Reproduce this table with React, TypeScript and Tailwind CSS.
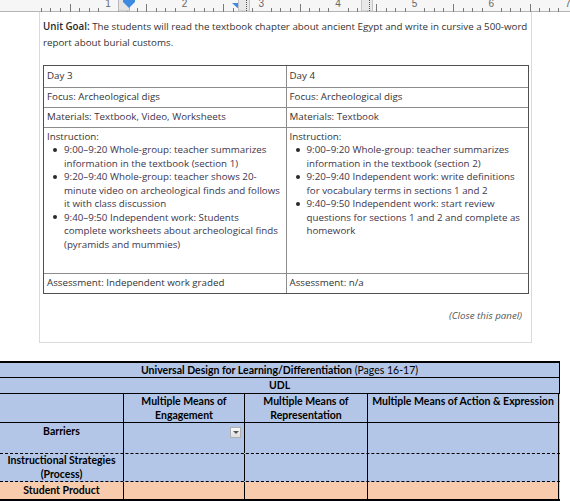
import React from "react";

const ticks = Array.from({ length: 60 }, (_, k) => k);

function Ruler() {
  const origin = 31.3;
  const step = 9.583;
  return (
    <svg width="570" height="12" className="block">
      <rect x="0" y="0" width="570" height="12" fill="#f6f6f6" />
      <line x1="0" y1="11.5" x2="570" y2="11.5" stroke="#b5b5b5" strokeWidth="1" />
      {ticks.map((k) => {
        const x = Math.round(origin + k * step) + 0.5;
        if (x > 570) return null;
        if (k % 8 === 0) return null;
        const tall = k % 4 === 0;
        return (
          <line
            key={k}
            x1={x}
            y1={tall ? 4 : 8}
            x2={x}
            y2={12}
            stroke="#7a7a7a"
            strokeWidth="1"
          />
        );
      })}
      {[1, 2, 3, 4, 5, 6, 7].map((n) => (
        <text
          key={n}
          x={origin + n * 8 * step}
          y="7"
          fontSize="10"
          fill="#666"
          textAnchor="middle"
          fontFamily="'Liberation Sans', Arial, sans-serif"
        >
          {n}
        </text>
      ))}
      {/* hanging indent box + first-line marker */}
      <rect x="118.5" y="-1" width="11" height="12" fill="#e4e4e4" stroke="#b8b8b8" />
      <path d="M123 0 H135 V2 L129 8 L123 2 Z" fill="#3d8be0" />
      {/* tab / column markers */}
      <path d="M232 3 H243 L237.5 8 Z" fill="#3d8be0" />
      <rect x="238.5" y="-1" width="11" height="12" fill="#e8e8e8" stroke="#c4c4c4" />
      <line x1="246.5" y1="0" x2="246.5" y2="11" stroke="#555" strokeDasharray="1 1" />
      <rect x="361.5" y="-1" width="11" height="12" fill="#e8e8e8" stroke="#c4c4c4" />
      <line x1="369.5" y1="0" x2="369.5" y2="11" stroke="#555" strokeDasharray="1 1" />
    </svg>
  );
}

// each bullet is kept as its printed lines
const day3 = [
  ["9:00–9:20 Whole-group: teacher summarizes", "information in the textbook (section 1)"],
  [
    "9:20–9:40 Whole-group: teacher shows 20-",
    "minute video on archeological finds and follows",
    "it with class discussion",
  ],
  [
    "9:40–9:50 Independent work: Students",
    "complete worksheets about archeological finds",
    "(pyramids and mummies)",
  ],
];

const day4 = [
  ["9:00–9:20 Whole-group: teacher summarizes", "information in the textbook (section 2)"],
  ["9:20–9:40 Independent work: write definitions", "for vocabulary terms in sections 1 and 2"],
  [
    "9:40–9:50 Independent work: start review",
    "questions for sections 1 and 2 and complete as",
    "homework",
  ],
];

function Bullets({ items }: { items: string[][] }) {
  return (
    <ul>
      {items.map((lines, i) => (
        <li key={i} className="flex">
          <span className="flex h-[13.5px] w-[17px] shrink-0 items-center pl-[6px]">
            <span className="block h-[4px] w-[4px] rounded-full bg-[#2a2a2a]" />
          </span>
          <span className="whitespace-nowrap text-[#40354d]">
            {lines.map((l, j) => (
              <React.Fragment key={j}>
                {j > 0 && <br />}
                {l}
              </React.Fragment>
            ))}
          </span>
        </li>
      ))}
    </ul>
  );
}

function Cell({ children, right, last }: { children: React.ReactNode; right?: boolean; last?: boolean }) {
  return (
    <td
      className={`px-[3px] align-top border-[#8c8c8c] ${right ? "" : "border-r"} ${last ? "" : "border-b"}`}
    >
      {children}
    </td>
  );
}

function LessonPanel() {
  return (
    <div className="ml-[39px] w-[493px] h-[331px] border-x border-b border-[#dadada] px-[3px] pt-[7px] font-['Open_Sans',sans-serif] text-[9.75px] text-[#333]">
      <p className="leading-[15.5px]">
        <span className="font-semibold text-[#2a2a2a]">Unit Goal:</span> The students will read the
        textbook chapter about ancient Egypt and write in cursive a 500-word report about burial
        customs.
      </p>
      <div className="mt-[15px] w-[486px] border border-[#505050]">
        <table className="w-full border-collapse table-fixed leading-[13.5px]">
          <colgroup>
            <col className="w-[242px]" />
            <col />
          </colgroup>
          <tbody>
            <tr className="h-[21px]">
              <Cell>
                <div className="pt-[3px]">Day 3</div>
              </Cell>
              <Cell right>
                <div className="pt-[3px]">Day 4</div>
              </Cell>
            </tr>
            <tr className="h-[20px]">
              <Cell>
                <div className="pt-[2px]">Focus: Archeological digs</div>
              </Cell>
              <Cell right>
                <div className="pt-[2px]">Focus: Archeological digs</div>
              </Cell>
            </tr>
            <tr className="h-[20px]">
              <Cell>
                <div className="pt-[2px]">
                  Materials: <span className="text-[#40354d]">Textbook, Video, Worksheets</span>
                </div>
              </Cell>
              <Cell right>
                <div className="pt-[2px]">
                  Materials: <span className="text-[#40354d]">Textbook</span>
                </div>
              </Cell>
            </tr>
            <tr className="h-[146px]">
              <Cell>
                <div className="pt-[2px]">Instruction:</div>
                <Bullets items={day3} />
              </Cell>
              <Cell right>
                <div className="pt-[2px]">Instruction:</div>
                <Bullets items={day4} />
              </Cell>
            </tr>
            <tr className="h-[20px]">
              <Cell last>
                <div className="pt-[2px]">Assessment: Independent work graded</div>
              </Cell>
              <Cell right last>
                <div className="pt-[2px]">Assessment: n/a</div>
              </Cell>
            </tr>
          </tbody>
        </table>
      </div>
      <p className="mt-[15px] pr-[6px] text-right italic text-[#555]">(Close this panel)</p>
    </div>
  );
}

function UdlSheet() {
  const cols = "grid grid-cols-[124px_121px_123px_191px]";
  return (
    <div className="mt-[18px] w-[560px] font-['Lato','Carlito',sans-serif] text-[10.5px] text-black">
      <div className="border-t-2 border-black" />
      <div className="h-[15px] bg-[#b4c6e7] border-r border-b border-black text-center leading-[14px]">
        <span className="font-bold">Universal Design for Learning/Differentiation</span> (Pages 16-17)
      </div>
      <div className="h-[16px] bg-[#b4c6e7] border-r border-b border-black text-center font-bold leading-[15px]">
        UDL
      </div>
      <div className={`${cols} h-[29px] bg-[#b4c6e7] border-b border-black font-bold text-center leading-[14px]`}>
        <div className="border-r border-black" />
        <div className="border-r border-black">
          Multiple Means of
          <br />
          Engagement
        </div>
        <div className="border-r border-black">
          Multiple Means of
          <br />
          Representation
        </div>
        <div className="border-r border-black whitespace-nowrap">Multiple Means of Action &amp; Expression</div>
      </div>
      <div className={`${cols} h-[31px] bg-[#b4c6e7] border-b border-dashed border-black font-bold text-center leading-[16px]`}>
        <div className="border-r border-solid border-black">Barriers</div>
        <div className="relative border-r border-solid border-black">
          <div className="absolute left-[106px] top-[4px] flex h-[11px] w-[11px] items-center justify-center border border-[#b0b0b0] bg-gradient-to-b from-[#fafafa] to-[#dedede]">
            <span className="block h-0 w-0 border-x-[3px] border-t-[3px] border-x-transparent border-t-[#555]" />
          </div>
        </div>
        <div className="border-r border-solid border-black" />
        <div className="border-r border-solid border-black" />
      </div>
      <div className={`${cols} h-[28px] bg-[#b4c6e7] border-b border-dashed border-black font-bold text-center leading-[14px]`}>
        <div className="-mt-[1px] border-r border-solid border-black whitespace-nowrap">
          Instructional Strategies
          <br />
          (Process)
        </div>
        <div className="border-r border-solid border-black" />
        <div className="border-r border-solid border-black" />
        <div className="border-r border-solid border-black" />
      </div>
      <div className={`${cols} h-[17px] bg-[#f8cbad] font-bold text-center leading-[16px]`}>
        <div className="border-r border-black">Student Product</div>
        <div className="border-r border-black" />
        <div className="border-r border-black" />
        <div className="border-r border-black" />
      </div>
      <div className="border-t-2 border-black" />
      <div className="mt-[1px] border-t border-[#333]" />
    </div>
  );
}

export default function App() {
  return (
    <div className="relative h-[501px] w-[570px] overflow-hidden bg-white">
      <Ruler />
      <LessonPanel />
      <UdlSheet />
    </div>
  );
}
